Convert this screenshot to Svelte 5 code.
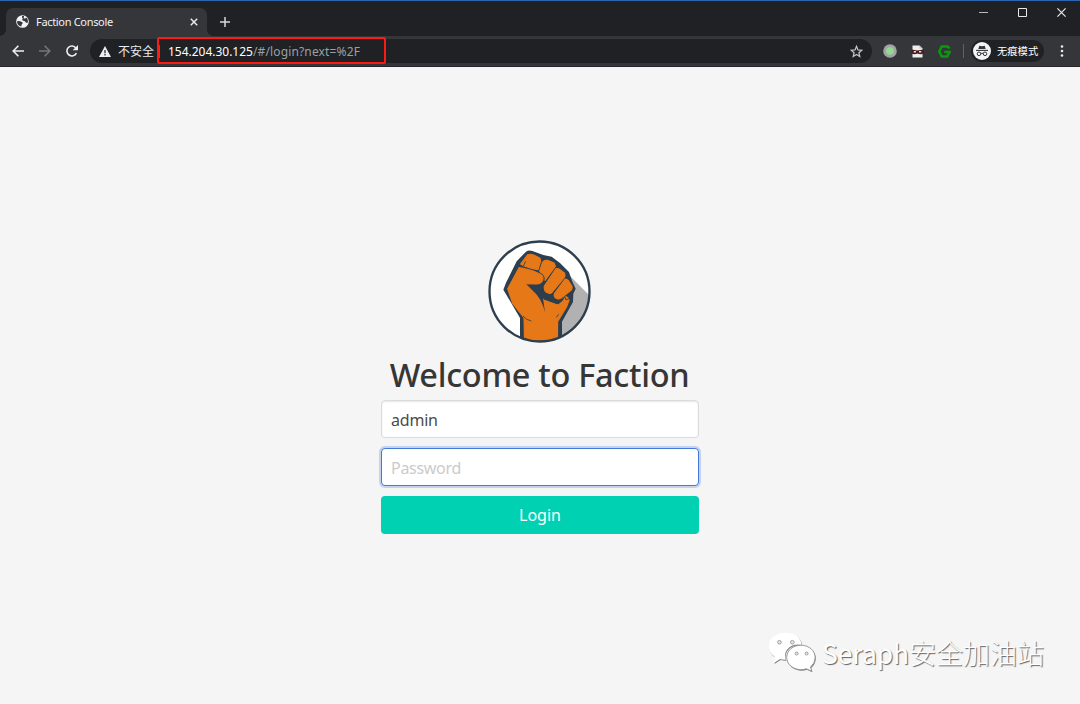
<script>
  let username = $state('admin');
  let password = $state('');
</script>

<div class="window">
  <header class="tabstrip">
    <div class="tab">
      <svg class="globe" viewBox="0 0 36 36">
        <circle cx="18" cy="18" r="17.5" fill="#f1f3f4" />
        <path d="M3 17 Q10 15 15 19 Q20 20 18 24 Q14 25 15 32 Q5 30 3 20Z M17 3 Q15 8 19 10 Q15 13 19 16 Q25 15 27 21 L32 22 Q35 13 29 7 Q25 12 21 8 Q23 5 22 3Z" fill="#35363a" />
      </svg>
      <span class="tab-title">Faction Console</span>
      <svg class="close" viewBox="0 0 8 8"><path d="M.8 .8 7.2 7.2M7.2 .8 .8 7.2" stroke="#e8eaed" stroke-width="1.5" /></svg>
    </div>
    <svg class="plus" viewBox="0 0 10 10"><path d="M5 0V10M0 5H10" stroke="#d5d7da" stroke-width="1.5" /></svg>
    <div class="controls">
      <svg width="9" height="11" viewBox="0 0 9 11"><path d="M0 5.5H9" stroke="#b8b9bb" /></svg>
      <svg width="9" height="9" viewBox="0 0 9 9"><path d="M.5 .5H8.5V8.5H.5Z" fill="none" stroke="#e8e8e8" /></svg>
      <svg width="9" height="9" viewBox="0 0 9 9"><path d="M.4 .4 8.6 8.6M8.6 .4 .4 8.6" stroke="#e8e8e8" stroke-width="1.200" /></svg>
    </div>
  </header>

  <nav class="toolbar">
    <div class="navicons">
      <svg width="12" height="12" viewBox="0 0 12 12"><path d="M12 6H1.2M6.4 .8 1.2 6 6.4 11.2" fill="none" stroke="#eceef0" stroke-width="1.6" /></svg>
      <svg width="12" height="12" viewBox="0 0 12 12"><path d="M0 6H10.8M5.6 .8 10.8 6 5.6 11.2" fill="none" stroke="#75777b" stroke-width="1.5" /></svg>
      <svg width="12" height="12" viewBox="0 0 12 12"><path d="M10.4 8.2A5 5 0 1 1 9.9 2.9" fill="none" stroke="#eceef0" stroke-width="1.6" /><path d="M12 0V5.3H6.7Z" fill="#eceef0" /></svg>
    </div>
    <div class="omnibox">
      <svg class="warn" viewBox="0 0 12 11"><path d="M6 0 12 11H0Z" fill="#eceef0" /><path d="M6 4V7.2M6 8.1V9.5" stroke="#202124" stroke-width="1.2" /></svg>
      <span class="insecure">不安全</span>
      <span class="sep"></span>
      <span class="url"><b>154.204.30.125</b>/#/login?next=%2F</span>
      <svg class="star" viewBox="0 0 24 24"><path d="M12 2.5 14.7 9 21.8 9.6 16.4 14.3 18 21.2 12 17.5 6 21.2 7.6 14.3 2.2 9.6 9.3 9Z" fill="none" stroke="#c3c5c8" stroke-width="2.3" /></svg>
      <span class="redbox"></span>
    </div>
    <div class="extensions">
      <svg width="14" height="14" viewBox="0 0 14 14"><circle cx="7" cy="7" r="6.8" fill="#a3a3a3" /><circle cx="7" cy="7" r="3.8" fill="#8fdc91" /></svg>
      <svg width="13" height="13" viewBox="0 0 13 13"><path d="M1.5 .5H8.5L11.5 3.5V12.5H1.5Z" fill="#eee" /><path d="M8.5 .5V3.5H11.5" fill="#bbb" /><path d="M.5 4.6Q6.5 6.2 12.5 4.6V8.3Q10 10.2 6.5 8.6 3 10.2 .5 8.3Z" fill="#48191c" /><path d="M2.7 6.7H5M8 6.7H10.3" stroke="#e5dede" stroke-width="1.4" /></svg>
      <svg width="13" height="13" viewBox="0 0 13 13"><path d="M11.5 3.3 9.5 1.4H3.7L1.3 6.5 3.7 11.6H9.3L11.6 7H6.3" fill="none" stroke="#079b0c" stroke-width="2.5" /></svg>
    </div>
    <span class="divider"></span>
    <div class="incognito">
      <svg width="18" height="18" viewBox="0 0 18 18"><circle cx="9" cy="9" r="9" fill="#f3f4f5" /><path d="M5.3 7 6.3 3.7Q9 4.6 11.7 3.7L12.7 7Z" fill="#35363a" /><path d="M3 8.4H15" stroke="#35363a" stroke-width="1.1" /><g fill="none" stroke="#35363a"><circle cx="6" cy="11.8" r="1.8" /><circle cx="12" cy="11.8" r="1.8" /><path d="M7.8 11.6Q9 10.8 10.2 11.6" /></g></svg>
      <span>无痕模式</span>
    </div>
    <svg class="more" viewBox="0 0 4 12"><g fill="#e8eaed"><circle cx="2" cy="1.5" r="1.3" /><circle cx="2" cy="6" r="1.3" /><circle cx="2" cy="10.5" r="1.3" /></g></svg>
  </nav>

  <main>
    <svg class="logo" viewBox="24 30 309 309">
      <defs><clipPath id="disc"><circle cx="178.500" cy="184.500" r="150" /></clipPath></defs>
      <circle cx="178.500" cy="184.500" r="150" fill="#fff" />
      <g clip-path="url(#disc)">
        <path d="M262 130 340 208V345H240V260Z" fill="#b1b1b1" />
        <path d="M138 65Q146 59 157 63L190 75 215 80 240 99 267 126 276 152 287 176 280 191 279 216 246 275V350H120V264L70 179 78 158 110 94Z" fill="#2d3e4f" />
        <g fill="#e77817" stroke="#e77817" stroke-width="3.500" stroke-linejoin="round">
          <path d="M142 75Q149 70 163 76L180 85 182 93 174 119 155 115 128 106 122 102Z" />
          <path d="M117 113Q133 115 160 123L180 132Q192 138 188 151 183 162 170 162L139 161Q169 179 180 190L191 210 233 225 249 207 256 199 265 205 267 211 260 230 233 274 232 346H134L132 263 98 220 83 176 97 151Z" />
          <path d="M188 96Q193 89 206 92L222 99 226 109 195 151Q199 137 182 127L179 123Z" />
          <path d="M228 116Q233 114 240 119L254 130Q257 137 252 144L217 186Q210 194 201 188 191 182 193 168Z" />
          <path d="M255 148Q259 146 266 153L276 169Q278 177 271 182L243 204Q235 210 227 204 220 199 224 190Z" />
        </g>
        <path d="M139 163Q169 166 182 166L190 187 211 193 222 207 237 212 256 200 247 213 235 223 189 205 195 247Q184 204 160 184Z" fill="#2d3e4f" />
        <path d="M137 94 130 108M129 258Q138 270 154 273M254 198 258 210 269 204M236 253 229 262" fill="none" stroke="#2d3e4f" stroke-width="2.500" />
      </g>
      <circle cx="178.500" cy="184.500" r="150" fill="none" stroke="#2d3e4f" stroke-width="7" />
    </svg>
    <h1><span>Welcome to Faction</span></h1>
    <form onsubmit={(e) => e.preventDefault()}>
      <input type="text" bind:value={username} />
      <input class="focused" type="password" placeholder="Password" bind:value={password} />
      <button>Login</button>
    </form>
  </main>

  <div class="watermark">
    <svg viewBox="0 0 144 124">
      <g fill="#858585" transform="translate(2 3)"><path d="M51 2C23 2 2 19 2 43 2 57 8 67 19 74L17 94 36 82Q44 85 53 84 45 63 63 47 78 34 101 39 96 2 51 2Z" /><path d="M99 40C75 40 56 56 56 77 56 98 76 114 100 114Q108 114 115 111L132 119 128 106Q142 94 142 77C142 56 123 40 99 40Z" /></g>
      <path d="M51 2C23 2 2 19 2 43 2 57 8 67 19 74L17 94 36 82Q44 85 53 84 45 63 63 47 78 34 101 39 96 2 51 2Z" fill="#fff" />
      <path d="M99 40C75 40 56 56 56 77 56 98 76 114 100 114Q108 114 115 111L132 119 128 106Q142 94 142 77C142 56 123 40 99 40Z" fill="#fff" stroke="#888" stroke-width="2.500" />
      <g fill="#e8e8e8" stroke="#777" stroke-width="2"><circle cx="34" cy="31" r="5.500" /><circle cx="73" cy="31" r="5.500" /><circle cx="86" cy="65" r="4.500" /><circle cx="116" cy="65" r="4.500" /></g>
    </svg>
    <span><i>Seraph</i>安全加油站</span>
  </div>
</div>

<style>
  :global(body) { margin: 0; }
  .window { position: relative; box-sizing: border-box; width: 1080px; height: 704px; overflow: hidden; background: #f5f5f5; display: flex; flex-direction: column; font-family: "Noto Sans", "Noto Sans CJK SC", sans-serif; }
  svg { display: block; flex: none; }
  .tabstrip { box-sizing: border-box; height: 36px; flex: none; background: #202124; border-top: 1px solid #2c67b2; display: flex; align-items: flex-start; padding-left: 6px; }
  .tab { position: relative; box-sizing: border-box; width: 201px; height: 28px; margin-top: 7px; background: #35363a; border-radius: 7px 7px 0 0; display: flex; align-items: center; padding: 0 9px 1px 10px; }
  .tab::before, .tab::after { content: ""; position: absolute; bottom: 0; width: 6px; height: 6px; }
  .tab::before { left: -6px; background: radial-gradient(circle at 0 0, transparent 5.5px, #35363a 6px); }
  .tab::after { right: -6px; background: radial-gradient(circle at 100% 0, transparent 5.5px, #35363a 6px); }
  .globe { width: 13px; height: 13px; }
  .tab-title { margin-left: 7px; flex: 1; font-size: 11px; color: #f1f3f4; letter-spacing: -0.32px; white-space: nowrap; }
  .close { width: 8px; height: 8px; }
  .plus { width: 10px; height: 10px; margin: 16px 0 0 13px; }
  .controls { display: flex; align-items: center; gap: 30px; margin: 6px 14.500px 0 auto; height: 11px; }
  .toolbar { box-sizing: border-box; height: 31px; flex: none; background: #35363a; border-bottom: 1px solid #26272a; display: flex; align-items: center; padding-left: 11.500px; }
  .navicons { display: flex; gap: 15px; }
  .omnibox { position: relative; box-sizing: border-box; width: 782px; height: 24px; margin-left: 12.500px; border-radius: 12px; background: #202124; display: flex; align-items: center; padding: 0 9px; white-space: nowrap; }
  .warn { width: 12px; height: 11px; }
  .insecure { margin-left: 7px; width: 37px; font-size: 12px; color: #e8eaed; }
  .sep { width: 1px; height: 13px; margin-left: 4px; background: #5f6368; }
  .url { margin-left: 8px; font-size: 12px; color: #9aa0a6; flex: 1; letter-spacing: .15px; }
  .url b { font-weight: 400; color: #fff; letter-spacing: -.02px; }
  .star { width: 13px; height: 13px; }
  .redbox { position: absolute; box-sizing: border-box; left: 67px; top: -2px; width: 229px; height: 27px; border: 2px solid #fb1b13; border-radius: 2px; }
  .extensions { display: flex; align-items: center; gap: 14px; margin-left: 11px; }
  .divider { width: 1px; height: 14px; background: #5f6063; margin-left: 12px; }
  .incognito { box-sizing: border-box; width: 73px; height: 22px; margin-left: 7px; border-radius: 11px; background: #202124; display: flex; align-items: center; padding: 0 0 1px 2px; font-size: 10.300px; color: #fff; white-space: nowrap; }
  .incognito span { margin-left: 6px; }
  .more { width: 4px; height: 12px; margin-left: 15.500px; }
  main { display: flex; flex-direction: column; align-items: center; padding-top: 173px; margin-right: 1px; }
  .logo { width: 103px; height: 103px; }
  h1 { margin: 10px 0 0; height: 43px; line-height: 43px; font-size: 32.500px; font-weight: 530; letter-spacing: -.3px; color: #363636; white-space: nowrap; }
  form { display: flex; flex-direction: column; width: 318px; margin: 4px 0 0 1px; gap: 10px; }
  input, button { box-sizing: border-box; width: 100%; height: 38px; margin: 0; border-radius: 4px; font: 16px "Noto Sans", sans-serif; letter-spacing: -.2px; }
  input { padding: 2px 9px 0; background: #fff; color: #4a4a4a; border: 1px solid #dbdbdb; box-shadow: inset 0 1px 2px #0a0a0a1a; outline: none; }
  input::placeholder { color: #cbcbcb; opacity: 1; letter-spacing: -.3px; }
  .focused { border-color: #4479d9; box-shadow: 0 0 0 2px #3273dc40; }
  button { border: 0; background: #00d1b2; color: #fff; padding: 0; letter-spacing: 0; }
  .watermark { position: absolute; left: 768px; top: 632px; display: flex; align-items: flex-start; }
  .watermark svg { width: 48px; height: 41px; }
  .watermark span { margin-left: 6px; margin-top: 1px; font: 300 27px/40px "Noto Sans CJK SC", sans-serif; color: #fff; text-shadow: 1px 1px 1px #606060; white-space: nowrap; }
  .watermark i { font: 400 26.400px/38px "Noto Sans CJK SC", sans-serif; }
</style>
